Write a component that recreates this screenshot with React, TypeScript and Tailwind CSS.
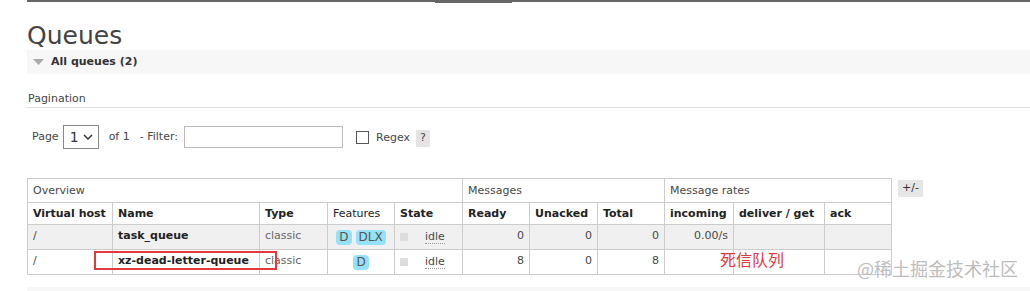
import React from 'react';

const font = { fontFamily: '"DejaVu Sans", Verdana, sans-serif' };
const cjk = { fontFamily: '"Noto Sans CJK SC", sans-serif' };

const Badge = ({ label }: { label: string }) => (
  <span className="inline-block rounded-[4px] bg-[#95e1f6] px-[3px] py-[1px] text-[12px] leading-[13px] text-[#555]">{label}</span>
);

const State = () => (
  <div className="flex items-center">
    <span className="ml-[5px] inline-block h-[8px] w-[8px] bg-[#ddd]" />
    <span className="ml-[17px] border-b border-dotted border-[#999] leading-[13px]">idle</span>
  </div>
);

const rows = [
  { name: 'task_queue', features: ['D', 'DLX'], ready: '0', unacked: '0', total: '0', incoming: '0.00/s', bg: 'bg-[#f0f0f0]' },
  { name: 'xz-dead-letter-queue', features: ['D'], ready: '8', unacked: '0', total: '8', incoming: '', bg: 'bg-white' },
];

export default function App() {
  return (
    <div className="relative h-[291px] w-[1030px] overflow-hidden bg-white text-[11px] text-[#484848]" style={font}>
      {/* top nav line */}
      <div className="ml-[27px] h-[2px] border-t-[2px] border-[#666]">
        <div className="ml-[408px] -mt-[2px] h-[3px] w-[77px] bg-[#666]" />
      </div>

      <div className="pl-[27px]">
        <h1 className="mt-[21px] text-[25px] leading-[26px] text-[#444]">Queues</h1>

        <div className="mt-[1px] flex h-[24px] items-center bg-[#f7f7f7] pl-[6px]">
          <svg width="11" height="6" viewBox="0 0 11 6" className="mr-[7px]">
            <polygon points="0,0 11,0 5.5,6" fill="#aaa" />
          </svg>
          <span className="font-bold text-[#333]">All queues (2)</span>
        </div>

        <div className="mt-[18px] border-b border-[#ddd] pb-[1px] pl-[1px] leading-[14px] text-[#444]">Pagination</div>

        <div className="mt-[17px] flex items-center pl-[5px]">
          <span>Page</span>
          <div className="ml-[4px] flex h-[24px] w-[36px] items-center border border-[#888] pl-[6px] text-[14px] text-[#333]">
            1
            <svg width="10" height="7" viewBox="0 0 10 7" className="ml-[4px]">
              <polyline points="1,1 5,5 9,1" fill="none" stroke="#333" strokeWidth="1.5" />
            </svg>
          </div>
          <span className="ml-[10px]">of 1</span>
          <span className="ml-[10px]">- Filter:</span>
          <div className="ml-[6px] h-[22px] w-[159px] border border-[#bbb]" />
          <span className="ml-[13px] inline-block h-[13px] w-[13px] border border-[#555]" />
          <span className="ml-[7px] mt-[3px]">Regex</span>
          <span className="ml-[6px] mt-[3px] flex h-[17px] w-[14px] items-center justify-center bg-[#e4e4e4]">?</span>
        </div>

        <div className="mt-[29px] flex items-start">
          <table className="border-collapse border border-[#ccc] leading-[14px]">
            <thead>
              <tr className="h-[24px]">
                <th colSpan={5} className="border border-[#ccc] px-[5px] text-left font-normal">Overview</th>
                <th colSpan={3} className="border border-[#ccc] px-[5px] text-left font-normal">Messages</th>
                <th colSpan={3} className="border border-[#ccc] px-[5px] text-left font-normal">Message rates</th>
              </tr>
              <tr className="h-[22px] text-[#222]">
                <th className="w-[85px] border border-[#ccc] px-[5px] text-left">Virtual host</th>
                <th className="w-[147px] border border-[#ccc] px-[5px] text-left">Name</th>
                <th className="w-[68px] border border-[#ccc] px-[5px] text-left">Type</th>
                <th className="w-[67px] border border-[#ccc] px-[5px] text-left font-normal">Features</th>
                <th className="w-[68px] border border-[#ccc] px-[5px] text-left">State</th>
                <th className="w-[67px] border border-[#ccc] px-[5px] text-left">Ready</th>
                <th className="w-[68px] border border-[#ccc] px-[5px] text-left">Unacked</th>
                <th className="w-[67px] border border-[#ccc] px-[5px] text-left">Total</th>
                <th className="w-[69px] border border-[#ccc] px-[5px] text-left">incoming</th>
                <th className="w-[91px] border border-[#ccc] px-[5px] text-left">deliver / get</th>
                <th className="w-[67px] border border-[#ccc] px-[5px] text-left">ack</th>
              </tr>
            </thead>
            <tbody>
              {rows.map((r) => (
                <tr key={r.name} className={`h-[25px] ${r.bg}`}>
                  <td className="border border-[#ccc] px-[5px] align-top pt-[4px]">/</td>
                  <td className="border border-[#ccc] px-[5px] align-top pt-[4px] font-bold text-[#222]">{r.name}</td>
                  <td className="border border-[#ccc] px-[5px] align-top pt-[4px] text-[#666]">classic</td>
                  <td className="border border-[#ccc] px-[5px] text-center">
                    <div className="flex justify-center gap-[4px]">
                      {r.features.map((f) => (
                        <Badge key={f} label={f} />
                      ))}
                    </div>
                  </td>
                  <td className="border border-[#ccc] px-[0px]">
                    <State />
                  </td>
                  <td className="border border-[#ccc] px-[5px] align-top pt-[4px] text-right">{r.ready}</td>
                  <td className="border border-[#ccc] px-[5px] align-top pt-[4px] text-right">{r.unacked}</td>
                  <td className="border border-[#ccc] px-[5px] align-top pt-[4px] text-right">{r.total}</td>
                  <td className="border border-[#ccc] px-[5px] align-top pt-[4px] text-right">{r.incoming}</td>
                  <td className="border border-[#ccc] px-[5px]"></td>
                  <td className="border border-[#ccc] px-[5px]"></td>
                </tr>
              ))}
            </tbody>
          </table>
          <div className="ml-[6px] mt-[2px] flex h-[17px] w-[25px] items-center justify-center bg-[#e6e6e6] text-[#333]">+/-</div>
        </div>

        <div className="mt-[12px] h-[10px] bg-[#f7f7f7]" />
      </div>

      {/* annotations over the screenshot */}
      <div className="absolute left-[94px] top-[251px] h-[19px] w-[183px] border-2 border-[#e0393e]" />
      <div className="absolute left-[720px] top-[250px] text-[16px] leading-[18px] text-[#e0393e]" style={cjk}>
        死信队列
      </div>
      <div className="absolute left-[857px] top-[258px] text-[18px] leading-[20px] text-[#bdbdbd]" style={cjk}>
        @稀土掘金技术社区
      </div>
    </div>
  );
}
